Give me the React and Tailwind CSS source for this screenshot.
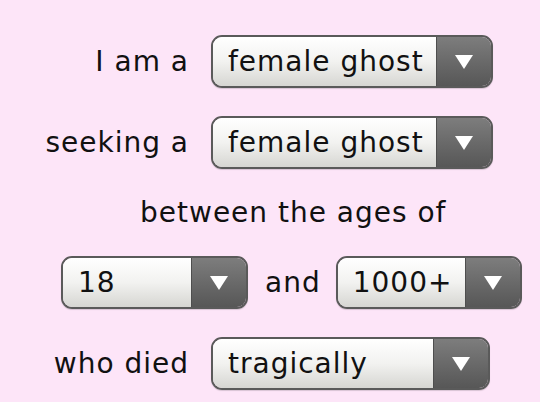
const Select = ({ value, width }) => (
  <div
    className="flex h-[53px] overflow-hidden rounded-[11px] border-2 border-[#5a5a5a] shadow-[0_1px_1px_rgba(0,0,0,0.15)]"
    style={{ width }}
  >
    <div className="flex flex-1 items-center bg-gradient-to-b from-[#ffffff] via-[#f2f2f0] to-[#d6d6d2] pl-[15px] text-[#111]">
      {value}
    </div>
    <div className="flex w-[55px] items-center justify-center border-l border-[#4e4e4e] bg-gradient-to-b from-[#7d7d7d] to-[#575757]">
      <svg width="18" height="14" viewBox="0 0 18 14">
        <polygon points="0,0 18,0 9,14" fill="#ffffff" />
      </svg>
    </div>
  </div>
)

const Row = ({ label, value, width = 282 }) => (
  <div className="flex items-center">
    <div className="w-[189px] text-right">{label}</div>
    <div className="ml-[22px]">
      <Select value={value} width={width} />
    </div>
  </div>
)

export default function App() {
  return (
    <div
      className="h-[402px] w-[540px] overflow-hidden bg-[#fde5f8] pt-[35px] text-[28px] leading-none tracking-[1px] text-[#111]"
      style={{ fontFamily: '"DejaVu Sans", Verdana, sans-serif' }}
    >
      <div className="flex flex-col">
        <Row label="I am a" value="female ghost" />
        <div className="mt-[28px]">
          <Row label="seeking a" value="female ghost" />
        </div>
        <div className="flex h-[87px] items-center pl-[140px]">between the ages of</div>
        <div className="flex items-center pl-[61px]">
          <Select value="18" width={187} />
          <span className="ml-[17px]">and</span>
          <div className="ml-[15px]">
            <Select value="1000+" width={186} />
          </div>
        </div>
        <div className="mt-[28px]">
          <Row label="who died" value="tragically" width={279} />
        </div>
      </div>
    </div>
  )
}
